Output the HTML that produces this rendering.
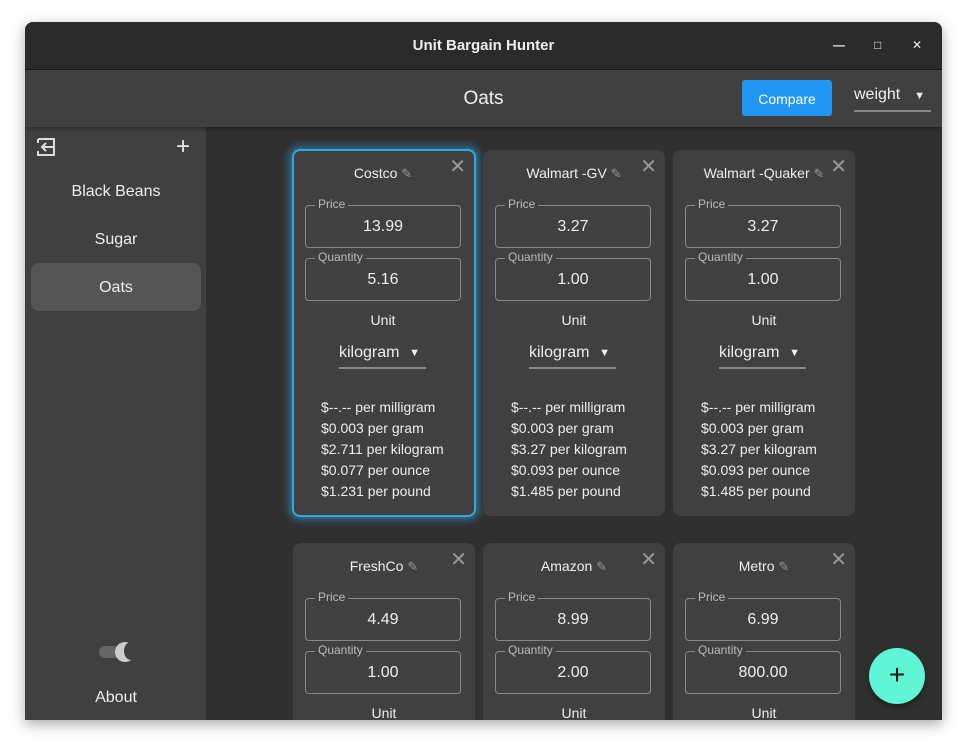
<!DOCTYPE html>
<html><head><style>
*{box-sizing:border-box;margin:0;padding:0}
body{width:967px;height:749px;background:#fff;font-family:"Liberation Sans","DejaVu Sans",sans-serif;color:#eee;position:relative;overflow:hidden}
.win{position:absolute;left:25px;top:22px;width:917px;height:698px;background:#303030;border-radius:8px 8px 0 0;overflow:hidden;box-shadow:0 4px 14px rgba(0,0,0,.35)}
.tb{position:absolute;left:0;top:0;width:917px;height:48px;background:#2b2b2b;border-bottom:1px solid #1a1a1a;text-align:center;line-height:47px;font-size:15px;font-weight:bold;color:#eee}
.ctl{position:absolute;top:0;font-size:12px;color:#eee;font-weight:bold}
.hd{position:absolute;left:0;top:48px;width:917px;height:57px;background:#404040;box-shadow:0 2px 4px rgba(0,0,0,.3);z-index:2}
.hd .t{position:absolute;left:0;width:917px;text-align:center;top:18px;font-size:19px}
.cmp{position:absolute;left:717px;top:10px;width:90px;height:36px;background:#2196f3;border-radius:3px;font-size:14px;text-align:center;line-height:38px;color:#fff}
.wt{position:absolute;left:829px;top:16px;width:77px;height:26px;border-bottom:2px solid #888;font-size:16px}
.sb{position:absolute;left:0;top:105px;width:181px;height:593px;background:#404040}
.sb .it{position:absolute;left:6px;width:170px;height:48px;text-align:center;line-height:50px;font-size:16px;border-radius:8px}
.card{position:absolute;width:182px;height:366px;background:#404040;border-radius:8px;font-size:14px}
.card.sel{border:2px solid #35a7e0;box-shadow:0 0 8px 3px rgba(53,167,224,.55)}
.card.sel>*{margin-left:-1px;margin-top:-1px}
.nm{position:absolute;top:15px;left:0;width:100%;text-align:center;font-size:14px}
.nm i{font-style:normal;color:#999;font-size:13px}
.x{position:absolute;right:8px;top:4px;font-size:20px;color:#999}
.fld{position:absolute;left:12px;width:156px;height:43px;border:1px solid #888;border-radius:4px;text-align:center;line-height:42px;font-size:16px}
.fld span{position:absolute;left:9px;top:-9px;font-size:12px;line-height:14px;background:#404040;padding:0 3px;color:#bbb}
.un{position:absolute;top:162px;width:100%;text-align:center}
.dd{position:absolute;left:46px;top:194px;width:87px;height:25px;border-bottom:2px solid #888;font-size:16px}
.res{position:absolute;left:28px;top:247px;line-height:21px;font-size:14px}
</style></head><body>
<div class="win">
<div class="tb">Unit Bargain Hunter
<span class="ctl" style="left:808px">&#8212;</span><span class="ctl" style="left:849px">&#9633;</span><span class="ctl" style="left:887px">&#10005;</span></div>
<div class="hd"><div class="t">Oats</div><div class="cmp">Compare</div><div class="wt">weight <span style="position:absolute;right:6px;font-size:11px;top:4px">&#9660;</span></div></div>
<div class="sb">
<svg style="position:absolute;left:11px;top:10px" width="20" height="20" viewBox="0 0 20 20"><path d="M2 2h16v16H2v-4M2 2v4M17 10H6M10 6l-4 4 4 4" stroke="#ddd" stroke-width="2" fill="none"/></svg>
<div style="position:absolute;left:151px;top:6px;font-size:24px">+</div>
<div class="it" style="top:40px">Black Beans</div>
<div class="it" style="top:88px">Sugar</div>
<div class="it" style="top:136px;background:#555">Oats</div>
<div style="position:absolute;left:74px;top:519px;width:22px;height:12px;background:#666;border-radius:6px"></div>
<div style="position:absolute;left:90px;top:515px;width:20px;height:20px;background:#ccc;border-radius:50%"></div>
<div style="position:absolute;left:99px;top:515px;width:14px;height:18px;background:#404040;border-radius:50%"></div>
<div class="it" style="top:546px">About</div>
</div>
</div>

<div class="card sel" style="left:292px;top:149px;width:184px;height:368px"><div class="nm">Costco <i>&#9998;</i></div><div class="x">&#10005;</div>
<div class="fld" style="top:55px"><span>Price</span>13.99</div><div class="fld" style="top:108px"><span>Quantity</span>5.16</div>
<div class="un">Unit</div><div class="dd">kilogram <span style="position:absolute;right:6px;font-size:11px;top:3px">&#9660;</span></div>
<div class="res">$--.-- per milligram<br>$0.003 per gram<br>$2.711 per kilogram<br>$0.077 per ounce<br>$1.231 per pound</div></div>

<div class="card" style="left:483px;top:150px"><div class="nm">Walmart -GV <i>&#9998;</i></div><div class="x">&#10005;</div>
<div class="fld" style="top:55px"><span>Price</span>3.27</div><div class="fld" style="top:108px"><span>Quantity</span>1.00</div>
<div class="un">Unit</div><div class="dd">kilogram <span style="position:absolute;right:6px;font-size:11px;top:3px">&#9660;</span></div>
<div class="res">$--.-- per milligram<br>$0.003 per gram<br>$3.27 per kilogram<br>$0.093 per ounce<br>$1.485 per pound</div></div>

<div class="card" style="left:673px;top:150px"><div class="nm">Walmart -Quaker <i>&#9998;</i></div><div class="x">&#10005;</div>
<div class="fld" style="top:55px"><span>Price</span>3.27</div><div class="fld" style="top:108px"><span>Quantity</span>1.00</div>
<div class="un">Unit</div><div class="dd">kilogram <span style="position:absolute;right:6px;font-size:11px;top:3px">&#9660;</span></div>
<div class="res">$--.-- per milligram<br>$0.003 per gram<br>$3.27 per kilogram<br>$0.093 per ounce<br>$1.485 per pound</div></div>

<div class="card" style="left:293px;top:543px;height:177px;border-radius:8px 8px 0 0"><div class="nm">FreshCo <i>&#9998;</i></div><div class="x">&#10005;</div>
<div class="fld" style="top:55px"><span>Price</span>4.49</div><div class="fld" style="top:108px"><span>Quantity</span>1.00</div><div class="un">Unit</div></div>
<div class="card" style="left:483px;top:543px;height:177px;border-radius:8px 8px 0 0"><div class="nm">Amazon <i>&#9998;</i></div><div class="x">&#10005;</div>
<div class="fld" style="top:55px"><span>Price</span>8.99</div><div class="fld" style="top:108px"><span>Quantity</span>2.00</div><div class="un">Unit</div></div>
<div class="card" style="left:673px;top:543px;height:177px;border-radius:8px 8px 0 0"><div class="nm">Metro <i>&#9998;</i></div><div class="x">&#10005;</div>
<div class="fld" style="top:55px"><span>Price</span>6.99</div><div class="fld" style="top:108px"><span>Quantity</span>800.00</div><div class="un">Unit</div></div>

<div style="position:absolute;left:869px;top:648px;width:56px;height:56px;border-radius:50%;background:#5ff5d5;color:#111;font-size:28px;text-align:center;line-height:54px;box-shadow:0 3px 6px rgba(0,0,0,.4)">+</div>
</body></html>
